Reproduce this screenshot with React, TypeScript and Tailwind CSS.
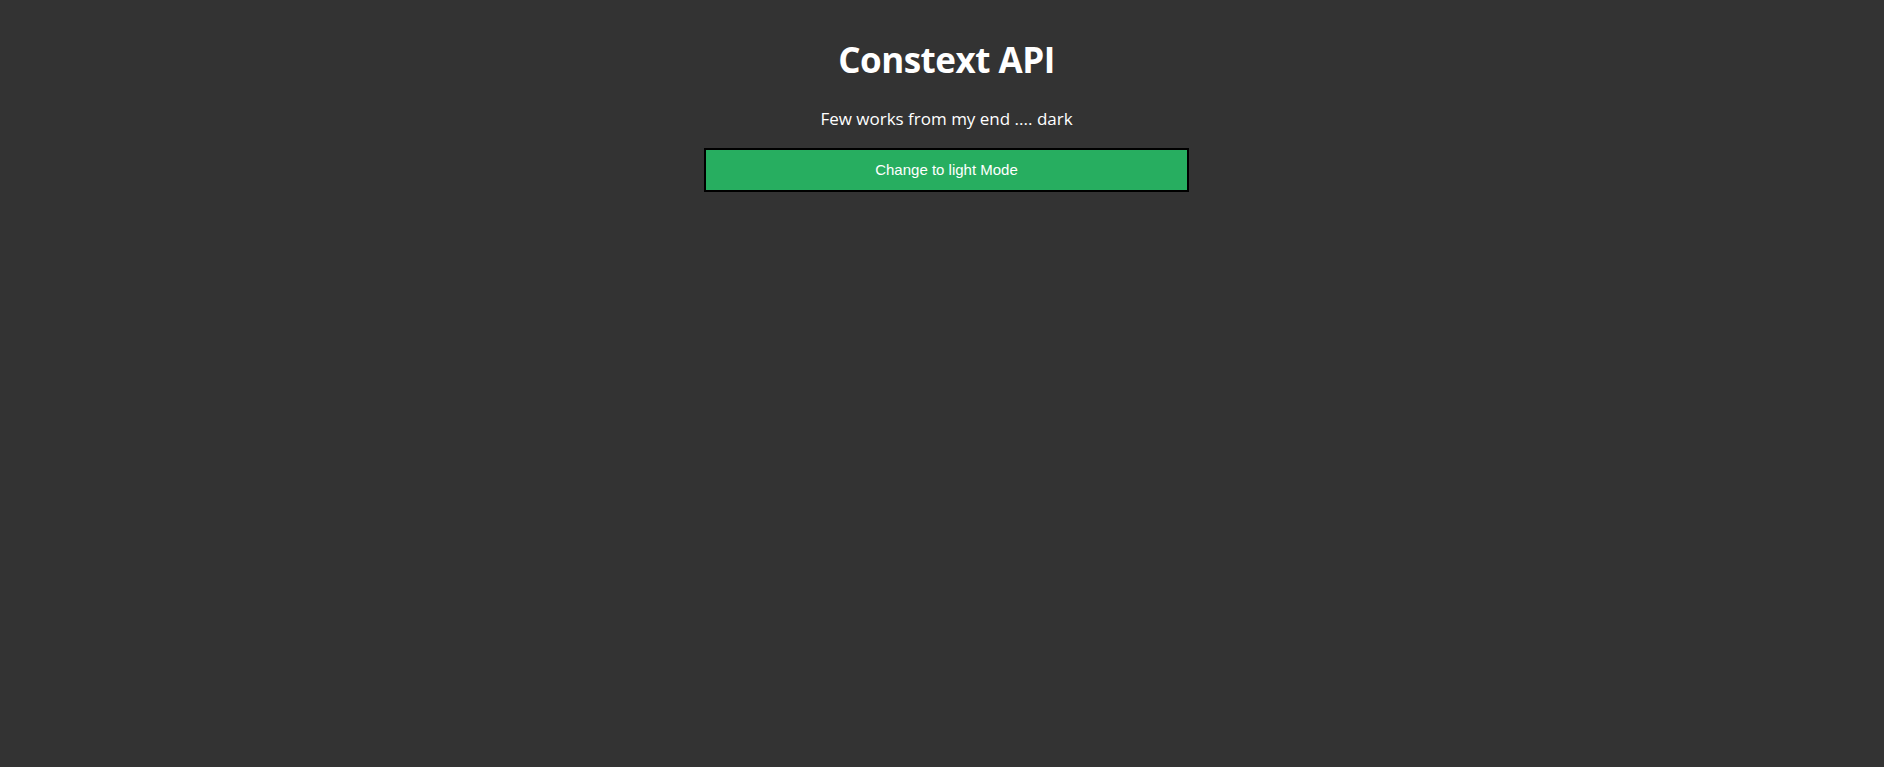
import React, { useState } from "react";

export default function App() {
  const [dark, setDark] = useState<boolean>(true);

  return (
    <div
      className={`min-h-screen w-full flex flex-col items-center pl-[9px] pt-[36px] ${
        dark ? "bg-[#333333] text-white" : "bg-white text-black"
      }`}
    >
      <h1 className="font-['Open_Sans',sans-serif] font-bold text-[35px] leading-[48px] tracking-[-0.5px]">
        Constext API
      </h1>
      <p className="mt-[23px] font-['Open_Sans',sans-serif] text-[17px] leading-[24px]">
        Few works from my end .... {dark ? "dark" : "light"}
      </p>
      <button
        onClick={() => setDark(!dark)}
        className="mt-[17px] w-[485px] h-[44px] bg-[#27ae60] border-2 border-black text-white font-['Liberation_Sans',Arial,sans-serif] text-[15px]"
      >
        Change to {dark ? "light" : "dark"} Mode
      </button>
    </div>
  );
}
